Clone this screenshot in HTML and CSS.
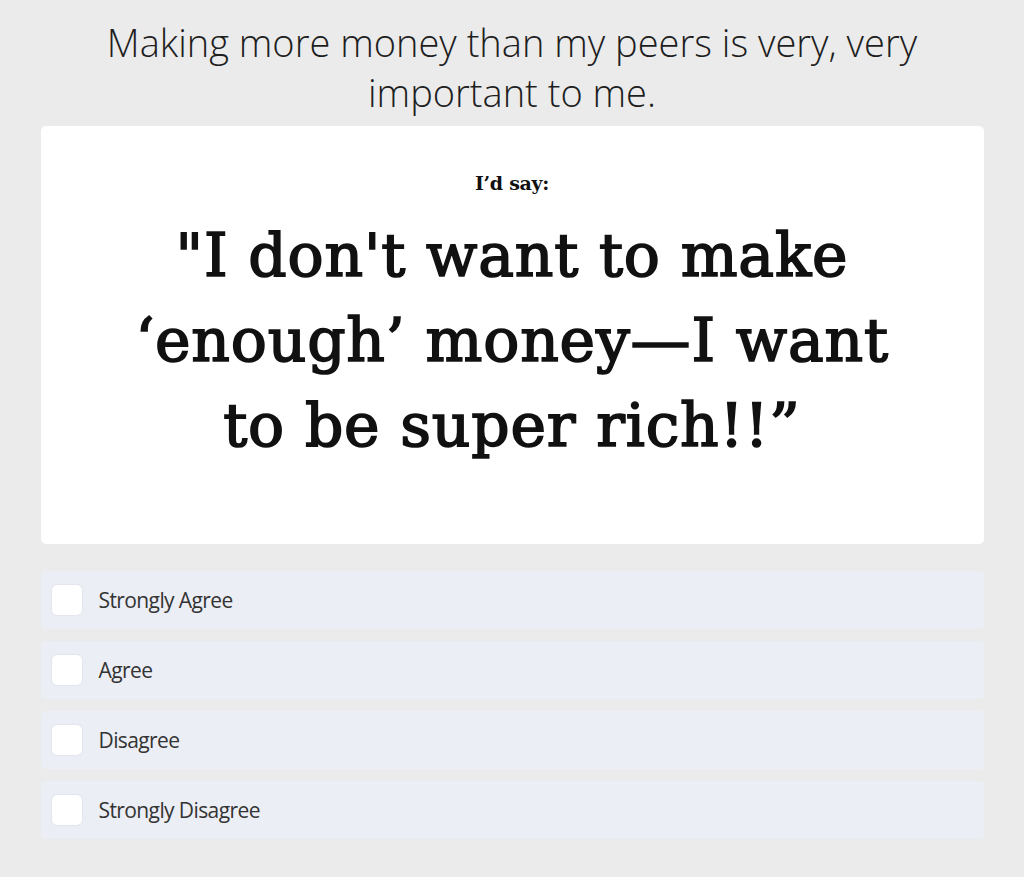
FILE: index.html
```html
<!DOCTYPE html>
<html>
<head>
<meta charset="utf-8">
<link rel="stylesheet" href="styles.css">
</head>
<body>
<main class="page">
  <h1 class="question">Making more money than my peers is very, very important to me.</h1>
  <section class="card">
    <p class="lead">I’d say:</p>
    <p class="quote">"I don't want to make<br>‘enough’ money—I want<br>to be super rich!!”</p>
  </section>
  <ul class="options">
    <li class="option"><span class="box"></span><span class="label">Strongly Agree</span></li>
    <li class="option"><span class="box"></span><span class="label">Agree</span></li>
    <li class="option"><span class="box"></span><span class="label">Disagree</span></li>
    <li class="option"><span class="box"></span><span class="label">Strongly Disagree</span></li>
  </ul>
</main>
</body>
</html>
```

FILE: styles.css
```css
html, body {
  margin: 0;
  padding: 0;
  background: #ebebeb;
}
.page {
  width: 943px;
  margin: 0 auto;
  padding-top: 17px;
  font-family: "Open Sans", "Noto Sans", sans-serif;
}
.question {
  margin: 0 auto 9px;
  max-width: 860px;
  font-size: 38px;
  font-weight: 300;
  line-height: 50px;
  text-align: center;
  color: #1e1e1e;
  letter-spacing: 0;
}
.card {
  background: #fff;
  border-radius: 5px;
  height: 418px;
  box-sizing: border-box;
  padding-top: 39px;
  text-align: center;
  color: #111;
}
.lead {
  margin: 0;
  font-family: "DejaVu Serif", serif;
  font-weight: 700;
  font-size: 19px;
  line-height: 36px;
  letter-spacing: -0.3px;
}
.quote {
  margin: 12px 0 0;
  font-family: "DejaVu Serif", serif;
  font-weight: 400;
  font-size: 60px;
  line-height: 85px;
  letter-spacing: 0.8px;
  -webkit-text-stroke: 1.7px #111;
}
.options {
  list-style: none;
  margin: 27px 0 0;
  padding: 0;
  display: flex;
  flex-direction: column;
  gap: 12px;
}
.option {
  height: 58px;
  background: #eceef5;
  border-radius: 4px;
  display: flex;
  align-items: center;
  padding-left: 11px;
}
.box {
  width: 30px;
  height: 30px;
  background: #fff;
  border-radius: 5px;
  box-shadow: 0 0 2px rgba(0,0,0,0.12);
}
.label {
  margin-left: 17px;
  font-size: 21px;
  color: #333;
  letter-spacing: -0.6px;
}
```
